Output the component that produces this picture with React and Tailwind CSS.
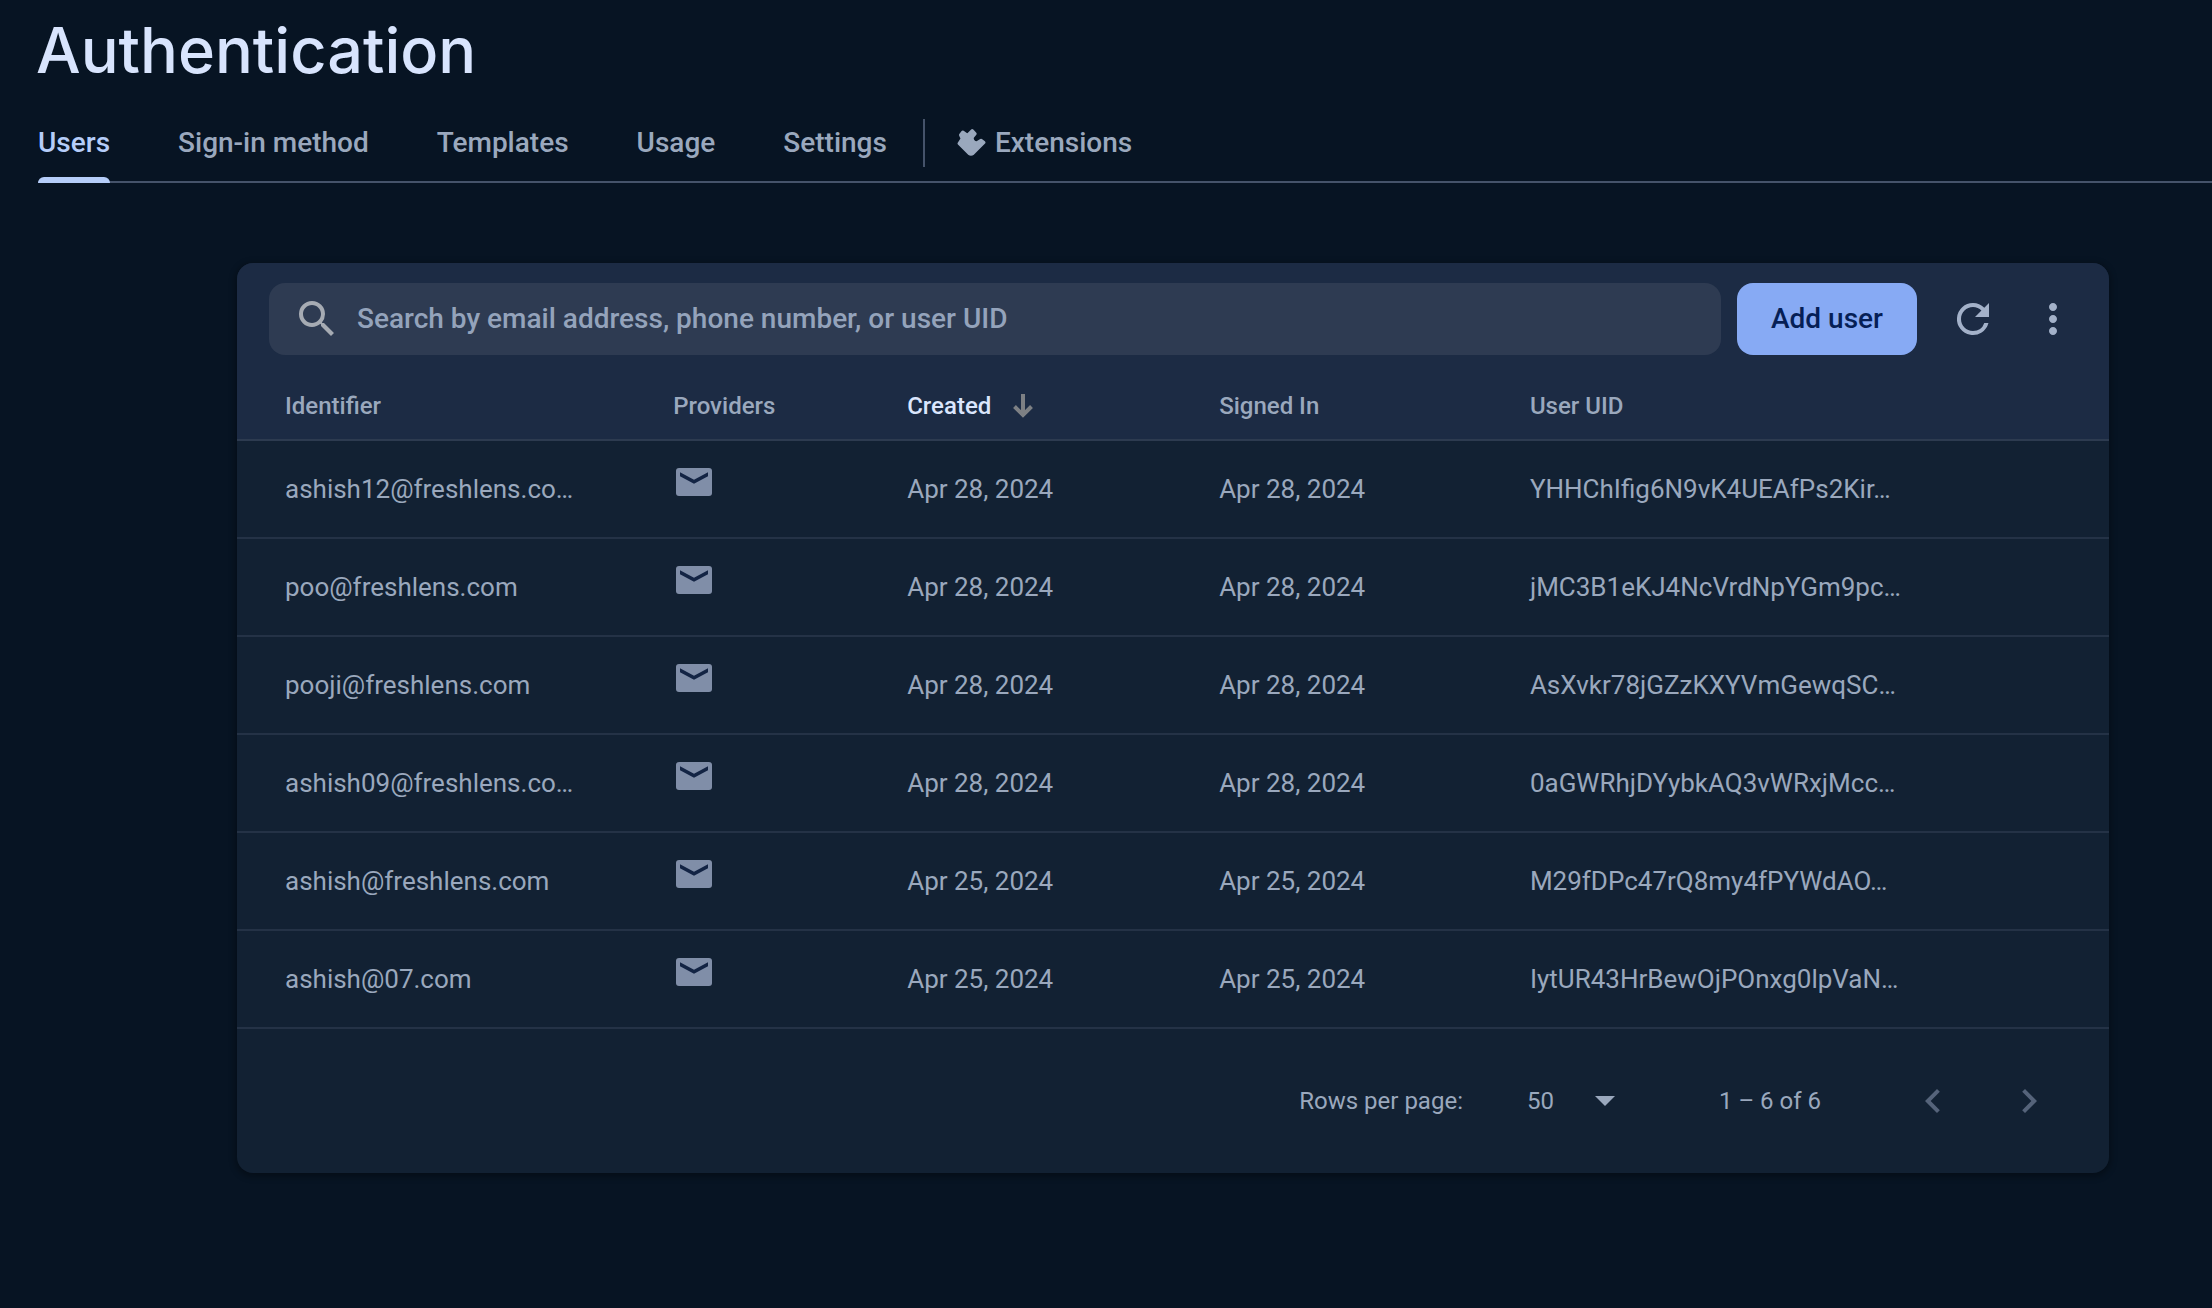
import React from "react";

const TABS = ["Users", "Sign-in method", "Templates", "Usage", "Settings"];

const USERS = [
  { id: "ashish12@freshlens.co…", created: "Apr 28, 2024", signedIn: "Apr 28, 2024", uid: "YHHChIfig6N9vK4UEAfPs2Kir…" },
  { id: "poo@freshlens.com", created: "Apr 28, 2024", signedIn: "Apr 28, 2024", uid: "jMC3B1eKJ4NcVrdNpYGm9pc…" },
  { id: "pooji@freshlens.com", created: "Apr 28, 2024", signedIn: "Apr 28, 2024", uid: "AsXvkr78jGZzKXYVmGewqSC…" },
  { id: "ashish09@freshlens.co…", created: "Apr 28, 2024", signedIn: "Apr 28, 2024", uid: "0aGWRhjDYybkAQ3vWRxjMcc…" },
  { id: "ashish@freshlens.com", created: "Apr 25, 2024", signedIn: "Apr 25, 2024", uid: "M29fDPc47rQ8my4fPYWdAO…" },
  { id: "ashish@07.com", created: "Apr 25, 2024", signedIn: "Apr 25, 2024", uid: "IytUR43HrBewOjPOnxg0lpVaN…" },
];

function Icon({ d, className = "size-12" }) {
  return (
    <svg viewBox="0 0 24 24" className={className} fill="currentColor" aria-hidden="true">
      <path d={d} />
    </svg>
  );
}

const SEARCH = "M15.5 14h-.79l-.28-.27A6.47 6.47 0 0 0 16 9.5 6.5 6.5 0 1 0 9.5 16c1.61 0 3.09-.59 4.23-1.57l.27.28v.79l5 4.99L20.49 19l-4.99-5zm-6 0C7.01 14 5 11.99 5 9.5S7.01 5 9.5 5 14 7.01 14 9.5 11.99 14 9.5 14z";
const REFRESH = "M17.65 6.35A7.958 7.958 0 0 0 12 4a8 8 0 1 0 7.73 10h-2.08A5.99 5.99 0 0 1 12 18c-3.31 0-6-2.69-6-6s2.69-6 6-6c1.66 0 3.14.69 4.22 1.78L13 11h7V4l-2.35 2.35z";
const MORE = "M12 8c1.1 0 2-.9 2-2s-.9-2-2-2-2 .9-2 2 .9 2 2 2zm0 2c-1.1 0-2 .9-2 2s.9 2 2 2 2-.9 2-2-.9-2-2-2zm0 6c-1.1 0-2 .9-2 2s.9 2 2 2 2-.9 2-2-.9-2-2-2z";
const PREV = "M15.41 7.41 14 6l-6 6 6 6 1.41-1.41L10.83 12z";
const NEXT = "M10 6 8.59 7.41 13.17 12l-4.58 4.59L10 18l6-6z";

function Tab({ children, active }) {
  return (
    <a
      href="#"
      aria-current={active ? "page" : undefined}
      className={
        active
          ? "relative flex items-center gap-2 text-[#b5cdf9] after:absolute after:inset-x-0 after:-bottom-0.5 after:h-1.5 after:rounded-t-md after:bg-[#b5cdf9]"
          : "flex items-center gap-2"
      }
    >
      {children}
    </a>
  );
}

export default function App() {
  return (
    <main className="min-h-screen bg-[#071423] font-[Roboto,sans-serif] text-[#9aa8bd]">
      <h1 className="px-9 pt-2.5 font-[Inter,sans-serif] text-[63px] leading-20 font-medium text-[#d8e4fd]">
        Authentication
      </h1>
      <nav aria-label="Authentication sections" className="mt-3.5 ml-[38px] flex h-[79px] items-stretch gap-8 border-b-2 border-[#45536a] text-[28px] font-medium">
        <div className="flex gap-[68px] pr-1">
          {TABS.map((t, i) => (
            <Tab key={t} active={i === 0}>{t}</Tab>
          ))}
        </div>
        <div className="h-12 w-0.5 self-center bg-[#45536a]" />
        <Tab>
          <svg viewBox="0 0 30 30" className="size-[30px]" fill="currentColor" stroke="currentColor" strokeWidth="3" strokeLinejoin="round" aria-hidden="true">
            <path d="M5.800 4 10.400 7.200 15.200 2.500 18.200 5.800 15.500 9C14.500 11.500 16.500 15 20 14.800L24 12.200 27 14.500 16 25.500Q14 27 12 25.500L2 15.500 5.200 10.500 3.500 7Z" />
          </svg>
          Extensions
        </Tab>
      </nav>

      <section className="mt-20 mr-[103px] ml-[237px] overflow-hidden rounded-2xl bg-[#122133] shadow-[0_2px_6px_2px_rgba(0,0,0,0.3)]">
        <div className="flex items-center bg-[#1c2b44] pt-4 pr-4 pl-8">
          <label className="flex h-18 flex-1 items-center gap-4 rounded-2xl bg-[#2e3b52] px-6 text-[#a6abb3]">
            <Icon d={SEARCH} />
            <input
              type="text"
              aria-label="Search users"
              placeholder="Search by email address, phone number, or user UID"
              className="min-w-0 flex-1 bg-transparent text-[28px] font-medium outline-none placeholder:text-[#94a3bb]"
            />
          </label>
          <button type="button" className="mx-4 h-18 w-[180px] rounded-2xl bg-[#87aaf4] text-[28px] font-medium text-[#061f56]">
            Add user
          </button>
          <button type="button" aria-label="Refresh" className="flex size-20 items-center justify-center text-[#a3b1c9]">
            <Icon d={REFRESH} />
          </button>
          <button type="button" aria-label="More options" className="flex size-20 items-center justify-center text-[#a3b1c9]">
            <Icon d={MORE} />
          </button>
        </div>

        <table className="w-full table-fixed text-left">
          <colgroup>
            <col className="w-[23.3%]" />
            <col className="w-[12.5%]" />
            <col className="w-1/6" />
            <col className="w-[16.6%]" />
            <col />
          </colgroup>
          <thead>
            <tr className="h-[81px] border-b-2 border-[#2d3b50] bg-[#1c2b44] text-2xl">
              <th className="pt-3.5 pl-12 font-medium">Identifier</th>
              <th className="pt-3.5 font-medium">Providers</th>
              <th aria-sort="descending" className="pt-3.5 font-medium text-[#dbe6fd]">
                <button type="button" className="flex items-center gap-5">
                  Created
                  <svg viewBox="0 0 24 24" className="size-6 text-[#7d8084]" fill="none" stroke="currentColor" strokeWidth="4" aria-hidden="true">
                    <path d="M12 0v21M3.500 12.500 12 21l8.500-8.500" />
                  </svg>
                </button>
              </th>
              <th className="pt-3.5 font-medium">Signed In</th>
              <th className="pt-3.5 font-medium">User UID</th>
            </tr>
          </thead>
          <tbody>
            {USERS.map((u) => (
              <tr key={u.id} className="h-[98px] border-b-2 border-[#243246] text-[26px]">
                <td className="pl-12">{u.id}</td>
                <td className="pb-3.5 pl-[3px]">
                  <svg viewBox="0 0 36 28" className="h-7 w-9" role="img" aria-label="Email">
                    <rect width="36" height="28" rx="3" fill="#808ea8" />
                    <path d="M4 4.200 18 11.700 32 4.200V8.200L18 15.700 4 8.200Z" fill="#132444" />
                  </svg>
                </td>
                <td>{u.created}</td>
                <td>{u.signedIn}</td>
                <td>{u.uid}</td>
              </tr>
            ))}
          </tbody>
        </table>

        <footer className="flex h-36 items-center justify-end pr-8 text-2xl">
          <label htmlFor="rows-per-page">Rows per page:</label>
          <div className="relative ml-16 flex items-center">
            <select id="rows-per-page" defaultValue="50" className="w-[100px] appearance-none bg-transparent outline-none">
              <option>50</option>
              <option>100</option>
              <option>250</option>
            </select>
            <svg viewBox="0 0 20 10" className="pointer-events-none absolute right-3 h-2.5 w-5" fill="currentColor" aria-hidden="true">
              <path d="M0 0h20L10 10z" />
            </svg>
          </div>
          <span className="mr-16 ml-[92px]">1 – 6 of 6</span>
          <button type="button" aria-label="Previous page" disabled className="flex size-24 items-center justify-center text-[#55637a]">
            <Icon d={PREV} />
          </button>
          <button type="button" aria-label="Next page" disabled className="flex size-24 items-center justify-center text-[#55637a]">
            <Icon d={NEXT} />
          </button>
        </footer>
      </section>
    </main>
  );
}
